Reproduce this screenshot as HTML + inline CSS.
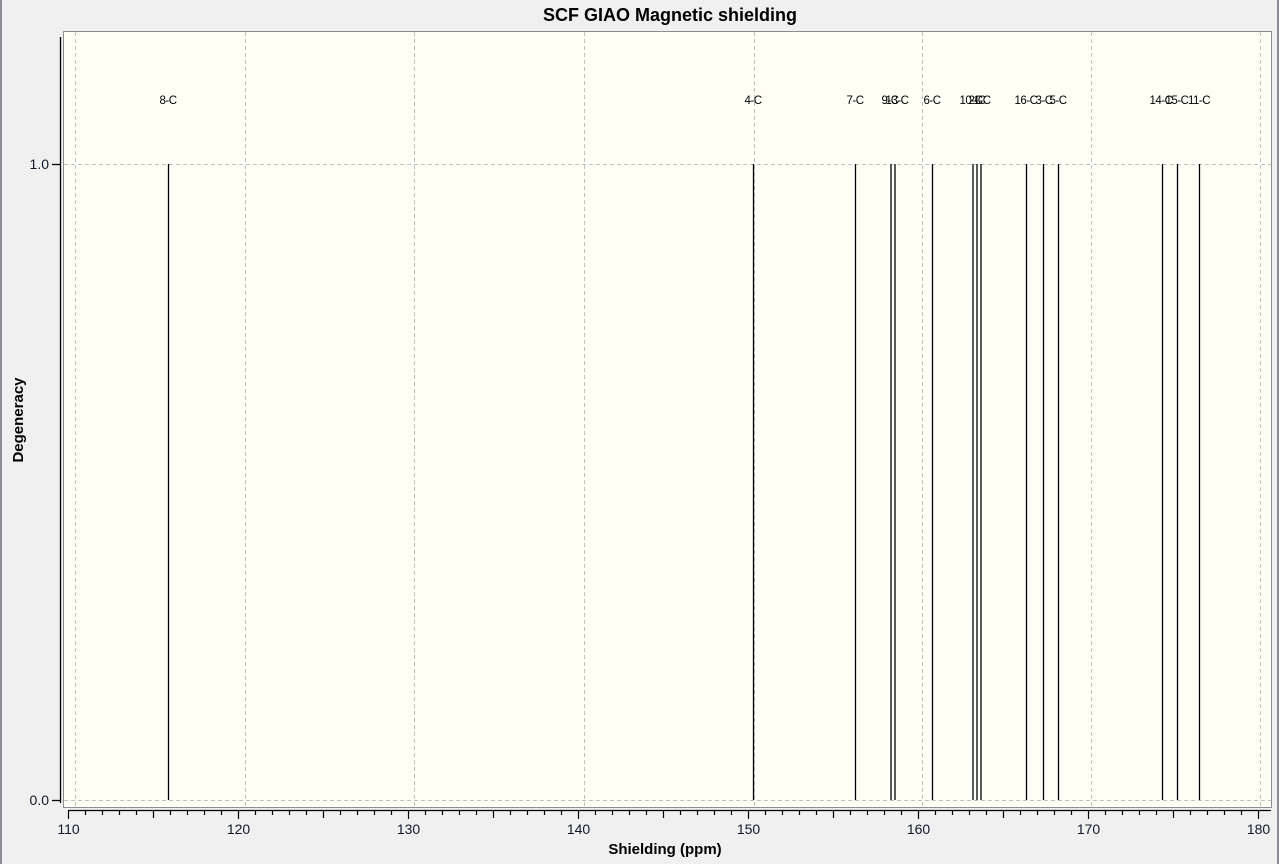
<!DOCTYPE html>
<html><head><meta charset="utf-8"><style>
html,body{margin:0;padding:0;background:#f0f0f0;width:1279px;height:864px;overflow:hidden}
</style></head><body>
<svg width="1279" height="864" xmlns="http://www.w3.org/2000/svg" font-family="Liberation Sans, sans-serif">
<rect x="0" y="0" width="1279" height="864" fill="#f0f0f0"/>
<rect x="0" y="0" width="2" height="864" fill="#8a8d96"/>
<rect x="1277" y="0" width="2" height="864" fill="#8a8d96"/>
<text x="670" y="21" font-size="18" font-weight="bold" text-anchor="middle" fill="#000">SCF GIAO Magnetic shielding</text>
<rect x="63.5" y="31.5" width="1208" height="776" fill="#fffff6" stroke="#8a8d96" stroke-width="1"/>
<g stroke="#c0c0c0" stroke-dasharray="4,3" stroke-width="1">
<line x1="75.5" y1="32" x2="75.5" y2="807"/>
<line x1="245.5" y1="32" x2="245.5" y2="807"/>
<line x1="414.5" y1="32" x2="414.5" y2="807"/>
<line x1="584.5" y1="32" x2="584.5" y2="807"/>
<line x1="754.5" y1="32" x2="754.5" y2="807"/>
<line x1="922.5" y1="32" x2="922.5" y2="807"/>
<line x1="1091.5" y1="32" x2="1091.5" y2="807"/>
<line x1="1260.5" y1="32" x2="1260.5" y2="807"/>
<line x1="64" y1="164.5" x2="1271" y2="164.5"/>
<line x1="64" y1="800.5" x2="1271" y2="800.5"/>
</g>
<g stroke="#000" stroke-width="1.3">
<line x1="168.5" y1="164" x2="168.5" y2="800"/>
<line x1="753.5" y1="164" x2="753.5" y2="800"/>
<line x1="855.5" y1="164" x2="855.5" y2="800"/>
<line x1="891" y1="164" x2="891" y2="800"/>
<line x1="895" y1="164" x2="895" y2="800"/>
<line x1="932.5" y1="164" x2="932.5" y2="800"/>
<line x1="973" y1="164" x2="973" y2="800"/>
<line x1="977" y1="164" x2="977" y2="800"/>
<line x1="981" y1="164" x2="981" y2="800"/>
<line x1="1026.5" y1="164" x2="1026.5" y2="800"/>
<line x1="1043.5" y1="164" x2="1043.5" y2="800"/>
<line x1="1058.5" y1="164" x2="1058.5" y2="800"/>
<line x1="1162.5" y1="164" x2="1162.5" y2="800"/>
<line x1="1177.5" y1="164" x2="1177.5" y2="800"/>
<line x1="1199.5" y1="164" x2="1199.5" y2="800"/>
</g>
<g font-size="11.5" fill="#000" text-anchor="middle" letter-spacing="-0.5">
<text x="168" y="104">8-C</text>
<text x="753" y="104">4-C</text>
<text x="855" y="104">7-C</text>
<text x="890" y="104">9-C</text>
<text x="897" y="104">13-C</text>
<text x="932" y="104">6-C</text>
<text x="971" y="104">10-C</text>
<text x="977" y="104">2-C</text>
<text x="982" y="104">1-C</text>
<text x="1026" y="104">16-C</text>
<text x="1044" y="104">3-C</text>
<text x="1058" y="104">5-C</text>
<text x="1161" y="104">14-C</text>
<text x="1177" y="104">15-C</text>
<text x="1199" y="104">11-C</text>
</g>
<g stroke="#000" stroke-width="1.3">
<line x1="60.5" y1="37" x2="60.5" y2="803"/>
<line x1="52" y1="164.5" x2="60" y2="164.5"/>
<line x1="52" y1="800.5" x2="60" y2="800.5"/>
<line x1="68" y1="810.5" x2="1271" y2="810.5"/>
</g>
<g stroke="#000" stroke-width="1.2" id="ticks"></g>
<g font-size="14" fill="#101828" text-anchor="end">
<text x="49" y="169">1.0</text>
<text x="49" y="805">0.0</text>
</g>
<g font-size="14" fill="#101828" text-anchor="middle" id="xl">
<text x="68.5" y="834">110</text><text x="238.5" y="834">120</text><text x="408.5" y="834">130</text><text x="578.5" y="834">140</text><text x="748.5" y="834">150</text><text x="918.5" y="834">160</text><text x="1088.5" y="834">170</text><text x="1258.5" y="834">180</text>
</g>
<text x="665" y="854" font-size="15" font-weight="bold" text-anchor="middle" fill="#000">Shielding (ppm)</text>
<text transform="translate(23,420) rotate(-90)" font-size="15" font-weight="bold" text-anchor="middle" fill="#000">Degeneracy</text>
</svg>
<script>
var g=document.getElementById('ticks'),s='';
for(var i=0;i<=70;i++){var x=68.5+17*i;var L=(i%5==0)?7:4;if(i%10==0)L=8;s+='<line x1="'+x+'" y1="811" x2="'+x+'" y2="'+(811+L)+'"/>';}
g.innerHTML=s;
</script>
</body></html>
